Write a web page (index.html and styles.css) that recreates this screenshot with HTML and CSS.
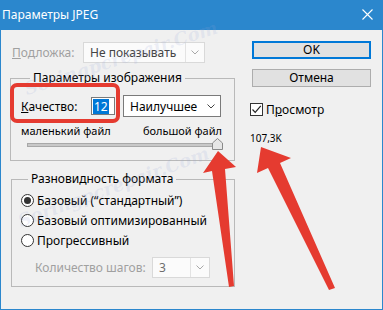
FILE: index.html
```html
<!DOCTYPE html>
<html lang="ru">
<head>
  <meta charset="UTF-8" />
  <title>Параметры JPEG</title>
  <link rel="stylesheet" href="styles.css">
</head>
<body>
<div class="screen">
  <div class="window">
    <div class="titlebar">
      <span class="title">Параметры JPEG</span>
      <svg class="close" width="11" height="11" viewBox="0 0 11 11"><path d="M0.5 0.5 L10.5 10.5 M10.5 0.5 L0.5 10.5" stroke="#fff" stroke-width="1.1" fill="none"/></svg>
    </div>

    <div class="content">
      <div class="col-left">
        <div class="row row-matte">
          <span class="label disabled"><u>П</u>одложка:</span>
          <div class="combo combo-off combo-matte">
            <span class="combo-text">Не показывать</span>
            <span class="combo-btn"><svg width="8" height="5" viewBox="0 0 8 5"><path d="M0.5 0.5 L4 4 L7.5 0.5" stroke="#a8a8a8" fill="none"/></svg></span>
          </div>
        </div>

        <fieldset class="group group-image">
          <legend>Параметры изображения</legend>
          <div class="row row-quality">
            <span class="label"><u>К</u>ачество:</span>
            <div class="num"><span class="num-sel">12</span></div>
            <div class="combo combo-quality">
              <span class="combo-text">Наилучшее</span>
              <svg width="8" height="5" viewBox="0 0 8 5"><path d="M0.5 0.5 L4 4 L7.5 0.5" stroke="#444" fill="none"/></svg>
            </div>
          </div>
          <div class="slider-labels">
            <span>маленький файл</span>
            <span>большой файл</span>
          </div>
          <div class="slider">
            <div class="track"></div>
            <svg class="thumb" width="11" height="12" viewBox="0 0 11 12"><path d="M0.5 11.5 L0.5 5 L5.5 0.5 L10.5 5 L10.5 11.5 Z" fill="#e6e6e6" stroke="#8a8a8a"/></svg>
          </div>
        </fieldset>

        <fieldset class="group group-format">
          <legend>Разновидность формата</legend>
          <div class="radio on"><span class="dot"></span>Базовый (“стандартный”)</div>
          <div class="radio"><span class="dot"></span>Базовый оптимизированный</div>
          <div class="radio"><span class="dot"></span>Прогрессивный</div>
          <div class="row row-steps">
            <span class="label disabled">Количество шагов:</span>
            <div class="combo combo-off combo-steps">
              <span class="combo-text">3</span>
              <span class="combo-btn"><svg width="8" height="5" viewBox="0 0 8 5"><path d="M0.5 0.5 L4 4 L7.5 0.5" stroke="#a8a8a8" fill="none"/></svg></span>
            </div>
          </div>
        </fieldset>
      </div>

      <div class="col-right">
        <button class="btn btn-default">OK</button>
        <button class="btn">Отмена</button>
        <div class="check">
          <span class="box"><svg width="11" height="11" viewBox="0 0 11 11"><path d="M1.5 5.5 L4.2 8.3 L9.8 1.8" stroke="#222" stroke-width="1.2" fill="none"/></svg></span>
          <span>П<u>р</u>осмотр</span>
        </div>
        <div class="size">107,3K</div>
      </div>
    </div>
  </div>

  <!-- водяные знаки -->
  <span class="wm wm1">Soringpcrepair.Com</span>
  <span class="wm wm2">Soringpcrepair.Com</span>

  <!-- выделение и стрелки -->
  <div class="highlight"></div>
  <svg class="arrows" width="383" height="310" viewBox="0 0 383 310">
    <path d="M218 151 L236 167 L225 169 L234 286 L229 287 L212 171 L203 173 Z" fill="#e53b30"/>
    <path d="M261 147 L291 158 L280 163 L335 288 L329 290 L268 168 L257 173 Z" fill="#e53b30"/>
  </svg>
</div>
</body>
</html>
```

FILE: styles.css
```css
* {
  box-sizing: border-box;
  margin: 0;
  padding: 0;
}

body {
  font-family: "Noto Sans", "Liberation Sans", sans-serif;
  font-size: 12px;
  color: #000;
  background: #fff;
}

.screen {
  position: relative;
  width: 383px;
  height: 310px;
  overflow: hidden;
}

.window {
  width: 383px;
  height: 310px;
  border: 1px solid #2b87cd;
  background: #f0f0f0;
}

/* ЗАГОЛОВОК */
.titlebar {
  height: 29px;
  background: #2b87cd;
  color: #fff;
  display: flex;
  align-items: center;
  justify-content: space-between;
  padding: 0 9px 2px 1px;
}

.title {
  font-size: 12px;
}

/* СОДЕРЖИМОЕ */
.content {
  display: flex;
  padding-left: 9px;
}

.col-left {
  width: 225px;
}

.col-right {
  width: 121px;
  margin-left: 15px;
  display: flex;
  flex-direction: column;
}

.row {
  display: flex;
  align-items: center;
}

.label {
  white-space: nowrap;
}

.disabled {
  color: #a0a0a0;
}

.row-matte {
  margin-top: 12px;
  margin-left: 2px;
  height: 21px;
}

.row-matte .label {
  width: 71px;
}

/* ВЫПАДАЮЩИЕ СПИСКИ */
.combo {
  display: flex;
  align-items: center;
  justify-content: space-between;
  background: #fff;
  border: 1px solid #7a7a7a;
  height: 21px;
}

.combo-text {
  padding-left: 6px;
  white-space: nowrap;
}

.combo-off {
  background: #fbfbfb;
  border-color: #d9d9d9;
  color: #444;
}

.combo-btn {
  height: 100%;
  width: 19px;
  border-left: 1px solid #e3e3e3;
  display: flex;
  align-items: center;
  justify-content: center;
}

.combo-matte {
  width: 122px;
}

.combo-quality {
  width: 98px;
  height: 22px;
  margin-left: 8px;
  padding-right: 5px;
}

.combo-steps {
  width: 58px;
  color: #6d6d6d;
}

/* ГРУППЫ */
.group {
  border: 1px solid #b9b9b9;
  padding: 10px 12px 10px 10px;
}

.group legend {
  line-height: 14px;
  padding: 0 3px;
}

.group-image {
  margin-top: 8px;
}

.group-image legend {
  margin-left: 9px;
}

.row-quality {
  height: 22px;
}

.row-quality .label {
  width: 70px;
}

.num {
  width: 24px;
  height: 18px;
  background: #fff;
  border: 1px solid #7a7a7a;
  padding: 0 0 0 1px;
  display: flex;
  align-items: center;
}

.num-sel {
  background: #0078d7;
  color: #fff;
  height: 15px;
  line-height: 15px;
  padding: 0 1px;
}

.slider-labels {
  display: flex;
  justify-content: space-between;
  font-size: 11px;
  line-height: 13px;
  margin-top: 7px;
}

.slider {
  position: relative;
  height: 12px;
  margin-top: 1px;
  padding-top: 5px;
}

.track {
  margin-left: 6px;
  width: 192px;
  height: 4px;
  background: #c8c8c8;
  border: 1px solid #a8a8a8;
}

.thumb {
  position: absolute;
  left: 191px;
  top: 0;
}

.group-format {
  margin-top: 11px;
  margin-left: 1px;
  padding: 4px 10px 8px 9px;
}

.group-format legend {
  margin-left: 7px;
}

.radio {
  display: flex;
  align-items: center;
  height: 20px;
  white-space: nowrap;
}

.dot {
  width: 13px;
  height: 13px;
  border: 1px solid #333;
  border-radius: 50%;
  background: #fff;
  margin-right: 3px;
  display: flex;
  align-items: center;
  justify-content: center;
}

.radio.on .dot::after {
  content: "";
  width: 7px;
  height: 7px;
  border-radius: 50%;
  background: #333;
}

.row-steps {
  margin-top: 7px;
  margin-left: 14px;
  height: 21px;
}

.row-steps .label {
  width: 117px;
}

/* КНОПКИ */
.btn {
  font-family: inherit;
  font-size: 12px;
  width: 119px;
  height: 18px;
  margin-left: 2px;
  background: #e1e1e1;
  border: 1px solid #adadad;
  line-height: 14px;
  color: #000;
}

.btn-default {
  margin-top: 11px;
  border: 2px solid #0078d7;
}

.btn + .btn {
  margin-top: 10px;
}

.check {
  display: flex;
  align-items: center;
  height: 18px;
  margin-top: 13px;
}

.box {
  width: 13px;
  height: 13px;
  border: 1px solid #333;
  background: #fff;
  margin-right: 3px;
  display: flex;
}

.size {
  font-size: 10px;
  line-height: 12px;
  margin-top: 14px;
}

/* ВОДЯНЫЕ ЗНАКИ */
.wm {
  position: absolute;
  font-family: "DejaVu Serif", serif;
  font-style: italic;
  font-weight: bold;
  font-size: 18px;
  color: rgba(150, 165, 215, 0.16);
  white-space: nowrap;
  transform-origin: left bottom;
}

.wm1 { left: 28px; top: 78px; transform: rotate(-18deg); }
.wm2 { left: 22px; top: 210px; transform: rotate(-20deg); }

/* ВЫДЕЛЕНИЕ */
.highlight {
  position: absolute;
  left: 10px;
  top: 83px;
  width: 110px;
  height: 40px;
  border: 4px solid #e53b30;
  border-radius: 7px;
}

.arrows {
  position: absolute;
  left: 0;
  top: 0;
}
```
